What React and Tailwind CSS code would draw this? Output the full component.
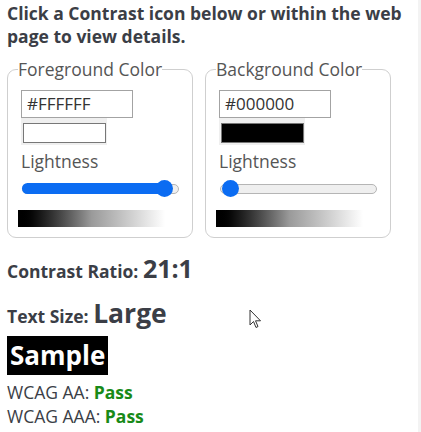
import React from "react";

export default function App() {
  return (
    <div className="relative w-[421px] h-[432px] overflow-hidden bg-white text-[#3b3e46]" style={{ fontFamily: '"Open Sans", "Liberation Sans", sans-serif' }}>
      <div className="absolute right-0 top-0 h-full w-[3px] bg-[#f3f3f3]" />

      <div className="pl-[7px] pr-[8px]">
        {/* ================= HEADING ================= */}
        <h2 className="text-[17.5px] leading-[23px] font-bold pt-[2px]">
          Click a Contrast icon below or within the web page to view details.
        </h2>

        {/* ================= PICKERS ================= */}
        <div className="flex gap-[12px] mt-[10px]">
          <Picker title="Foreground Color" hex="#FFFFFF" swatch="bg-white" value={100} />
          <Picker title="Background Color" hex="#000000" swatch="bg-black" value={0} />
        </div>

        {/* ================= RESULTS ================= */}
        <p className="mt-[13px] text-[17.5px] font-bold leading-[34px]">
          Contrast Ratio: <span className="text-[25px]">21:1</span>
        </p>
        <p className="mt-[6px] text-[17.5px] font-bold leading-[38px]">
          Text Size: <span className="text-[26.5px]">Large</span>
        </p>
        <div className="mt-[1px] inline-block bg-black text-white text-[26px] font-bold leading-[39px] px-[3px]">
          Sample
        </div>
        <p className="mt-[5px] text-[17.5px] leading-[24px]">
          WCAG AA: <span className="font-bold text-[#188a18]">Pass</span>
        </p>
        <p className="text-[17.5px] leading-[24px]">
          WCAG AAA: <span className="font-bold text-[#188a18]">Pass</span>
        </p>
      </div>

      {/* mouse pointer */}
      <svg className="absolute left-[249px] top-[309px]" width="13" height="20" viewBox="0 0 13 20">
        <path d="M1 1 L1 16 L4.5 12.5 L7 18.5 L9 17.5 L6.5 11.8 L11.5 11.8 Z" fill="white" stroke="#333" strokeWidth="1" strokeLinejoin="round" />
      </svg>
    </div>
  );
}

/* ================= SMALL COMPONENTS ================= */

const Picker = ({ title, hex, swatch, value }) => (
  <fieldset className="w-[186px] border border-[#cfcfcf] rounded-[9px] pl-[13px] pr-[10px] pb-[10px]">
    <legend className="ml-[-3px] text-[17.5px] leading-[22px] text-[#555]">{title}</legend>
    <div className="mt-[10px] w-[112px] h-[28px] border border-[#a3a3a3] text-[17px] leading-[26px] pl-[5px] text-[#333]">
      {hex}
    </div>
    <div className="w-[86px] h-[27px] bg-[#efefef] pt-[5px] pb-[2px] pl-[2px] pr-[1px]">
      <div className={`w-full h-full border border-[#777] ${swatch}`} />
    </div>
    <p className="mt-[4px] text-[17.5px] leading-[24px] text-[#555]">Lightness</p>
    <Slider value={value} />
    <div className="mt-[13px] ml-[-3px] w-[147px] h-[17px] bg-gradient-to-r from-black via-[#9a9a9a] to-white" />
  </fieldset>
);

const Slider = ({ value }) => (
  <div className="relative mt-[7px] h-[17px] w-[157px] ml-[1px] flex items-center">
    <div className="h-[10px] w-full rounded-full bg-[#efefef] border border-[#b5b5b5]" />
    {value > 50 && <div className="absolute left-0 top-[3px] h-[11px] w-[150px] rounded-full bg-[#0b6cf2]" />}
    <div
      className="absolute top-0 w-[17px] h-[17px] rounded-full bg-[#0b6cf2]"
      style={{ left: value > 50 ? "134px" : "2px" }}
    />
  </div>
);
